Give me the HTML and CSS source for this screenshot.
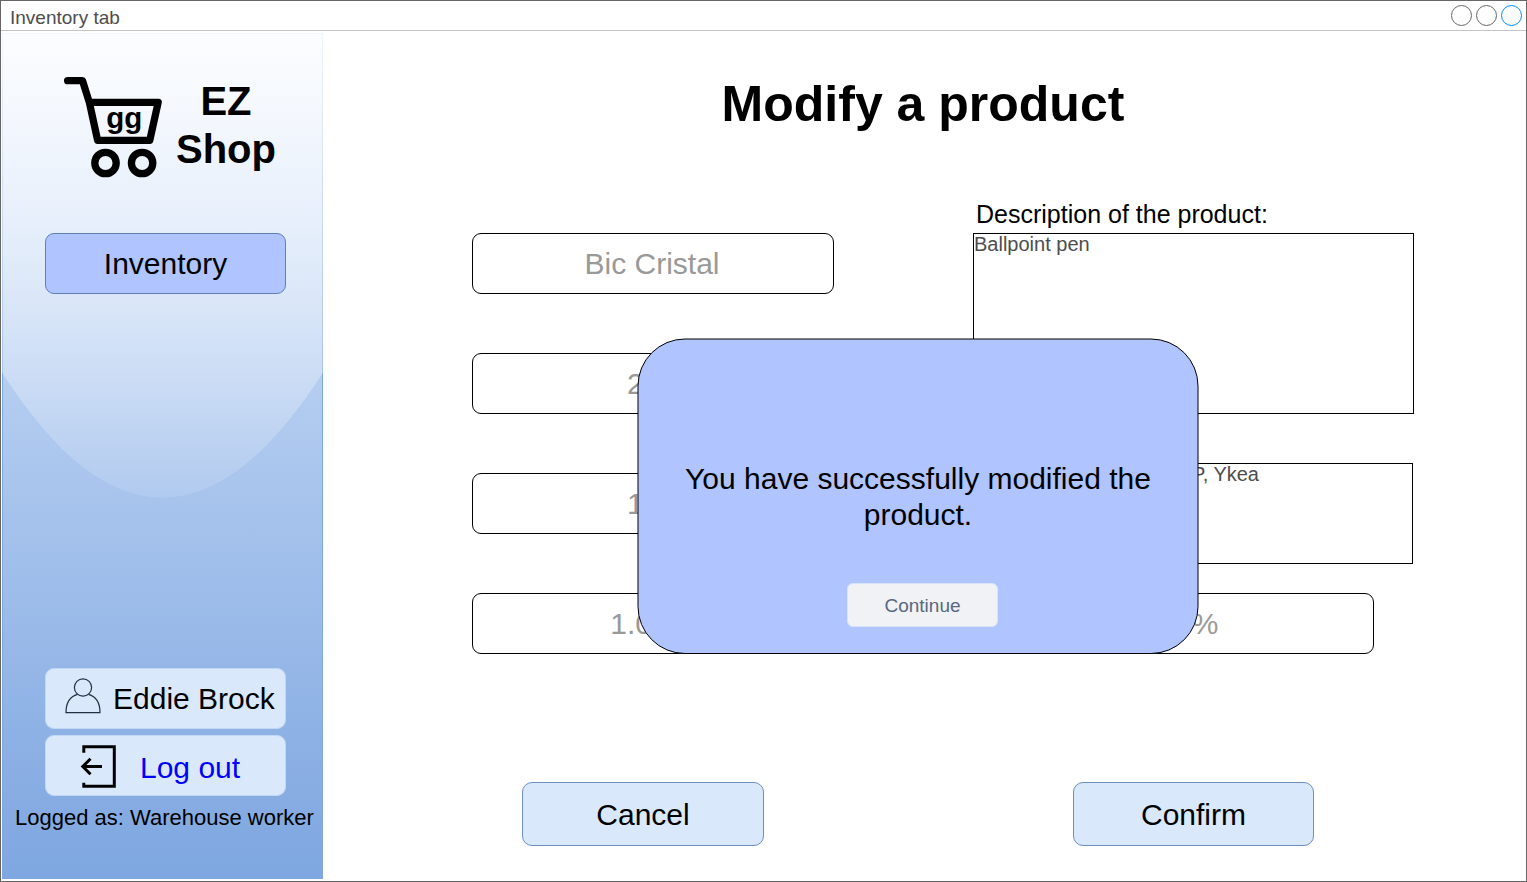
FILE: index.html
```html
<!DOCTYPE html>
<html lang="en">
<head>
<meta charset="utf-8">
<title>Inventory tab</title>
<link rel="stylesheet" href="styles.css">
</head>
<body>
<div class="window">
  <header class="titlebar">
    <span class="titlebar-text">Inventory tab</span>
    <svg class="controls" width="72" height="22" viewBox="0 0 72 22" fill="none">
      <circle cx="10.500" cy="10.500" r="10" stroke="#666"/>
      <circle cx="35.500" cy="10.500" r="10" stroke="#666"/>
      <circle cx="60.500" cy="10.500" r="10" stroke="#008cff"/>
    </svg>
  </header>
  <div class="body">
    <aside class="sidebar">
      <svg class="glass" width="321" height="847" viewBox="0 0 321 847">
        <defs>
          <linearGradient id="base" x1="0" y1="0" x2="0" y2="1">
            <stop offset="0" stop-color="#dae8fc"/><stop offset="1" stop-color="#7ea6e0"/>
          </linearGradient>
          <linearGradient id="shine" x1="0" y1="0" x2="0" y2="1">
            <stop offset="0" stop-color="#fff" stop-opacity=".9"/><stop offset="1" stop-color="#fff" stop-opacity=".1"/>
          </linearGradient>
        </defs>
        <rect x=".5" y="1.500" width="320" height="845" fill="url(#base)" stroke="#7ea6e0"/>
        <path d="M0 1V340.500Q160.500 591 321 340.500V1Z" fill="url(#shine)"/>
      </svg>
      <div class="brand">
        <svg class="cart" width="100" height="104" viewBox="63 75 100 104" fill="none" stroke="#000" stroke-width="7.300" stroke-linecap="round" stroke-linejoin="round">
          <path d="M67.600 80.700H82.500L89.500 103L97.600 140.300H149.800L158.200 102.300H89.500"/>
          <circle cx="105.500" cy="163" r="10.700"/>
          <circle cx="142.100" cy="163" r="10.700"/>
          <text class="cart-label" x="124.300" y="127.500" text-anchor="middle">gg</text>
        </svg>
        <div class="brand-name">EZ<br>Shop</div>
      </div>
      <a class="nav">Inventory</a>
      <div class="account">
        <div class="chip user">
          <svg width="38" height="38" viewBox="64 677 38 38" fill="none" stroke="#22303f" stroke-width="1.200">
            <circle cx="83" cy="687.500" r="8.600"/>
            <path d="M77.500 694.400C70 696.500 66 703 66 712.700H100C100 703 96 696.500 88.500 694.400"/>
          </svg>
          <span>Eddie Brock</span>
        </div>
        <div class="chip logout">
          <svg width="38" height="46" viewBox="80 744 38 46" fill="none" stroke="#000" stroke-width="3">
            <path d="M83.800 752.800V746.800H114.300V786.200H83.800V782.800M83 766.500H102M90.500 758.800L82.800 766.500L90.500 774.200"/>
          </svg>
          <span>Log out</span>
        </div>
        <div class="role">Logged as: Warehouse worker</div>
      </div>
    </aside>
    <main class="main">
      <h1 class="title">Modify a product</h1>
      <div class="form">
        <div class="left">
          <div class="field">Bic Cristal</div>
          <div class="field">200</div>
          <div class="field">100</div>
          <div class="field">1.00 €</div>
        </div>
        <div class="right">
          <div class="label">Description of the product:</div>
          <div class="area description">Ballpoint pen</div>
          <div class="area suppliers">HP, Ykea</div>
          <div class="field discount">4 %</div>
        </div>
      </div>
      <div class="actions">
        <div class="button cancel">Cancel</div>
        <div class="button">Confirm</div>
      </div>
    </main>
  </div>
  <div class="modal">
    <svg class="modal-shape" width="562" height="316" viewBox="637 338 562 316">
      <rect x="638" y="339" width="560" height="314.500" rx="47" fill="#b0c4ff" stroke="#000"/>
    </svg>
    <p class="modal-text">You have successfully modified the<br>product.</p>
    <div class="continue">Continue</div>
  </div>
</div>
</body>
</html>
```
FILE: styles.css
```css
* { box-sizing: border-box; }
body { margin: 0; background: #fff; color: #000; font-family: "Liberation Sans", Arial, sans-serif; font-size: 30px; }
.window { position: relative; width: 1527px; height: 882px; border: 1px solid #666; overflow: hidden; }
.titlebar { display: flex; justify-content: space-between; height: 30px; padding: 0 3px 0 9px; border-bottom: 1px solid #c4c4c4; }
.titlebar-text { font-size: 19px; line-height: 33px; color: #4d4d4d; }
.controls { margin-top: 4px; }
.body { display: flex; }
.sidebar { position: relative; display: flex; flex-direction: column; width: 321px; height: 847px; margin: 1px 0 0 1px; }
.glass { position: absolute; inset: 0; }
.brand { position: relative; display: flex; padding: 43px 0 0 61px; height: 201px; }
.cart { flex: none; }
.cart-label { font-size: 29.5px; font-weight: bold; fill: #000; stroke: none; }
.brand-name { width: 126px; padding-top: 2px; font-size: 40px; font-weight: bold; line-height: 48px; text-align: center; }
.nav { position: relative; width: 241px; height: 61px; margin-left: 43px; border: 1px solid #5f7fb5; border-radius: 9px; background: #b0c4ff; line-height: 59px; text-align: center; }
.account { position: relative; display: flex; flex-direction: column; gap: 6px; margin-top: 374px; }
.chip { display: flex; width: 241px; height: 61px; margin-left: 43px; border: 1px solid #c2d7f5; border-radius: 9px; background: #dae8fc; line-height: 59px; white-space: nowrap; }
.user svg { flex: none; margin: 8px 11px 0 18px; }
.logout { color: #00f; line-height: 63px; }
.logout svg { flex: none; margin: 8px 22px 0 34px; }
.role { margin: 3px 0 0 13px; font-size: 22px; line-height: 25px; white-space: nowrap; }
.main { flex: 1; padding: 41px 0 0 149px; }
.title { width: 902px; margin: 0; font-size: 50px; line-height: 64px; text-align: center; }
.form { display: flex; gap: 139px; height: 557px; padding-top: 66px; }
.left { display: flex; flex-direction: column; gap: 59px; padding-top: 31px; }
.field { width: 362px; height: 61px; padding-right: 2px; border: 1px solid #000; border-radius: 9px; line-height: 59px; color: #999; text-align: center; }
.label { height: 31px; padding-left: 3px; font-size: 25px; line-height: 25px; }
.area { border: 1px solid #000; font-size: 20px; line-height: 20px; color: #4d4d4d; }
.description { width: 441px; height: 181px; }
.suppliers { width: 440px; height: 101px; margin-top: 49px; padding-right: 153px; text-align: right; }
.discount { width: 361px; margin: 29px 0 0 40px; }
.actions { display: flex; gap: 309px; margin: 89px 0 0 50px; }
.button { width: 241px; height: 64px; border: 1px solid #6c8ebf; border-radius: 10px; background: #dae8fc; line-height: 63px; text-align: center; }
.button.cancel { width: 242px; }
.modal { position: absolute; left: 636px; top: 337px; width: 562px; height: 316px; }
.modal-shape { position: absolute; left: 0; top: 0; }
.modal-text { position: relative; margin: 0; padding-top: 123px; line-height: 36px; text-align: center; }
.continue { position: relative; width: 151px; height: 44px; margin: 50px 0 0 210px; border: 1px solid #d8e3fa; border-radius: 6px; background: #f0f2f5; color: #596780; font-size: 19px; line-height: 43px; text-align: center; }
```
